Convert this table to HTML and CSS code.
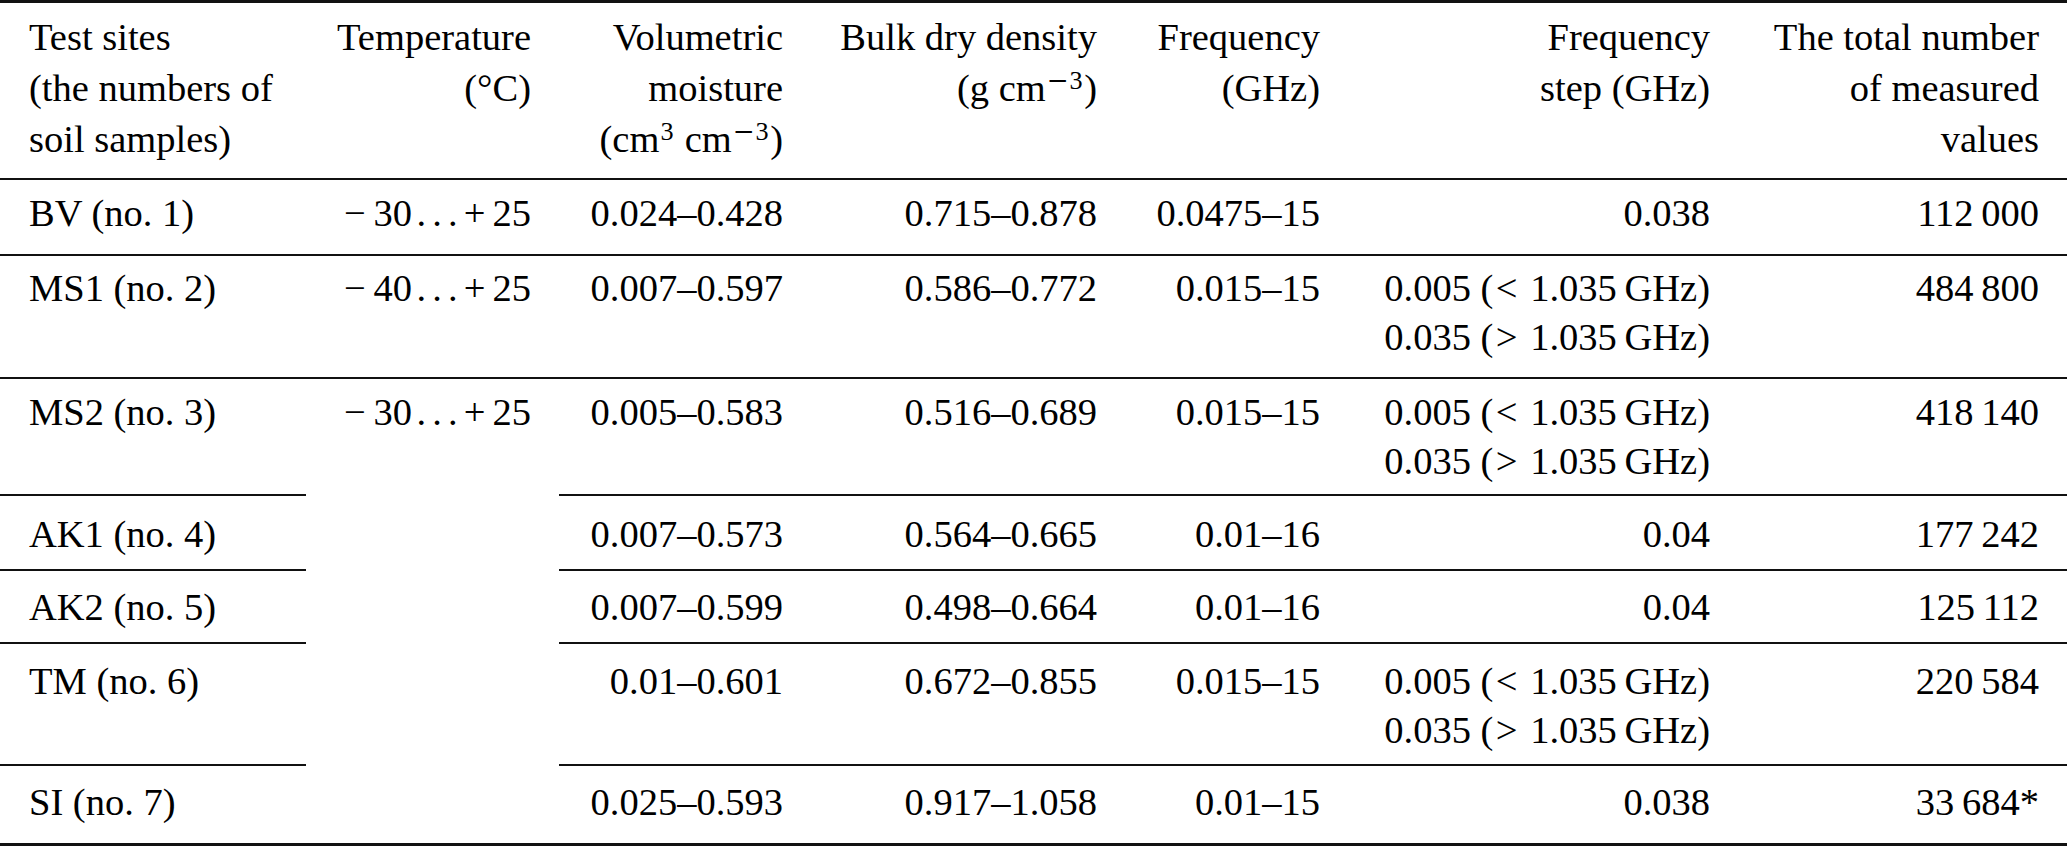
FILE: index.html
```html
<!DOCTYPE html>
<html lang="en">
<head>
<meta charset="utf-8">
<title>Test sites</title>
<link rel="stylesheet" href="styles.css">
</head>
<body>
<table class="data">
  <colgroup>
    <col class="c-site">
    <col class="c-temp">
    <col class="c-moist">
    <col class="c-dens">
    <col class="c-freq">
    <col class="c-step">
    <col class="c-total">
  </colgroup>
  <thead>
    <tr>
      <th class="left">Test sites<br>(the numbers of<br>soil samples)</th>
      <th>Temperature<br>(°C)</th>
      <th>Volumetric<br>moisture<br>(cm<sup>3</sup> cm<sup><span class="sm">−</span>3</sup>)</th>
      <th>Bulk dry density<br>(g cm<sup><span class="sm">−</span>3</sup>)</th>
      <th>Frequency<br>(GHz)</th>
      <th>Frequency<br>step (GHz)</th>
      <th>The total number<br>of measured<br>values</th>
    </tr>
  </thead>
  <tbody>
    <tr class="r-bv">
      <td class="left">BV (no. 1)</td>
      <td><span class="neg">−</span>30<span class="ell">...</span><span class="pos">+</span>25</td>
      <td>0.024–0.428</td>
      <td>0.715–0.878</td>
      <td>0.0475–15</td>
      <td>0.038</td>
      <td>112&thinsp;000</td>
    </tr>
    <tr class="r-ms1">
      <td class="left">MS1 (no. 2)</td>
      <td><span class="neg">−</span>40<span class="ell">...</span><span class="pos">+</span>25</td>
      <td>0.007–0.597</td>
      <td>0.586–0.772</td>
      <td>0.015–15</td>
      <td>0.005 (<span class="rel">&lt;</span> 1.035&thinsp;GHz)<br>0.035 (<span class="rel">&gt;</span> 1.035&thinsp;GHz)</td>
      <td>484&thinsp;800</td>
    </tr>
    <tr class="r-ms2">
      <td class="left">MS2 (no. 3)</td>
      <td class="span-temp" rowspan="5"><span class="neg">−</span>30<span class="ell">...</span><span class="pos">+</span>25</td>
      <td>0.005–0.583</td>
      <td>0.516–0.689</td>
      <td>0.015–15</td>
      <td>0.005 (<span class="rel">&lt;</span> 1.035&thinsp;GHz)<br>0.035 (<span class="rel">&gt;</span> 1.035&thinsp;GHz)</td>
      <td>418&thinsp;140</td>
    </tr>
    <tr class="r-ak1">
      <td class="left">AK1 (no. 4)</td>
      <td>0.007–0.573</td>
      <td>0.564–0.665</td>
      <td>0.01–16</td>
      <td>0.04</td>
      <td>177&thinsp;242</td>
    </tr>
    <tr class="r-ak2">
      <td class="left">AK2 (no. 5)</td>
      <td>0.007–0.599</td>
      <td>0.498–0.664</td>
      <td>0.01–16</td>
      <td>0.04</td>
      <td>125&thinsp;112</td>
    </tr>
    <tr class="r-tm">
      <td class="left">TM (no. 6)</td>
      <td>0.01–0.601</td>
      <td>0.672–0.855</td>
      <td>0.015–15</td>
      <td>0.005 (<span class="rel">&lt;</span> 1.035&thinsp;GHz)<br>0.035 (<span class="rel">&gt;</span> 1.035&thinsp;GHz)</td>
      <td>220&thinsp;584</td>
    </tr>
    <tr class="r-si">
      <td class="left">SI (no. 7)</td>
      <td>0.025–0.593</td>
      <td>0.917–1.058</td>
      <td>0.01–15</td>
      <td>0.038</td>
      <td>33&thinsp;684*</td>
    </tr>
  </tbody>
</table>
</body>
</html>
```

FILE: styles.css
```css
html, body {
  margin: 0;
  padding: 0;
  background: #ffffff;
}

body {
  font-family: "Liberation Serif", "Times New Roman", Times, serif;
  font-size: 38.5px;
  color: #000000;
}

.data {
  width: 2067px;
  table-layout: fixed;
  border-collapse: separate;
  border-spacing: 0;
}

.c-site  { width: 306px; }
.c-temp  { width: 253px; }
.c-moist { width: 252px; }
.c-dens  { width: 314px; }
.c-freq  { width: 223px; }
.c-step  { width: 390px; }
.c-total { width: 329px; }

.data th,
.data td {
  font-weight: normal;
  text-align: right;
  vertical-align: top;
  white-space: nowrap;
  padding: 9px 28px 16px 28px;
  line-height: 49px;
  border-bottom: 2px solid #111111;
}

.data th {
  line-height: 51px;
  padding-bottom: 13px;
  border-top: 3px solid #111111;
}

.data .left {
  text-align: left;
  padding-left: 29px;
}

sup {
  font-size: 0.68em;
  line-height: 0;
  vertical-align: 0.46em;
  margin-left: 0.04em;
  margin-right: 0.06em;
}

.sm {
  font-family: "DejaVu Serif", "Liberation Serif", serif;
  margin-right: 0.03em;
}

.neg {
  margin-right: 0.2em;
}

.ell {
  letter-spacing: 0.16em;
  margin-left: 0.12em;
}

.pos {
  margin-right: 0.18em;
}

.rel {
  margin: 0 0.08em 0 0.06em;
}

.r-ms1 td { padding-top: 8px; padding-bottom: 15px; }
.r-ms2 td { padding-top: 9px; padding-bottom: 8px; }
.r-ak1 td { padding-top: 14px; padding-bottom: 10px; }
.r-ak2 td { padding-top: 12px; padding-bottom: 10px; }
.r-tm td  { padding-top: 13px; padding-bottom: 9px; }
.r-si td  { padding-top: 12px; padding-bottom: 16px; border-bottom-width: 3px; }

.data td.span-temp {
  padding-top: 9px;
  border-bottom-width: 3px;
}
```
